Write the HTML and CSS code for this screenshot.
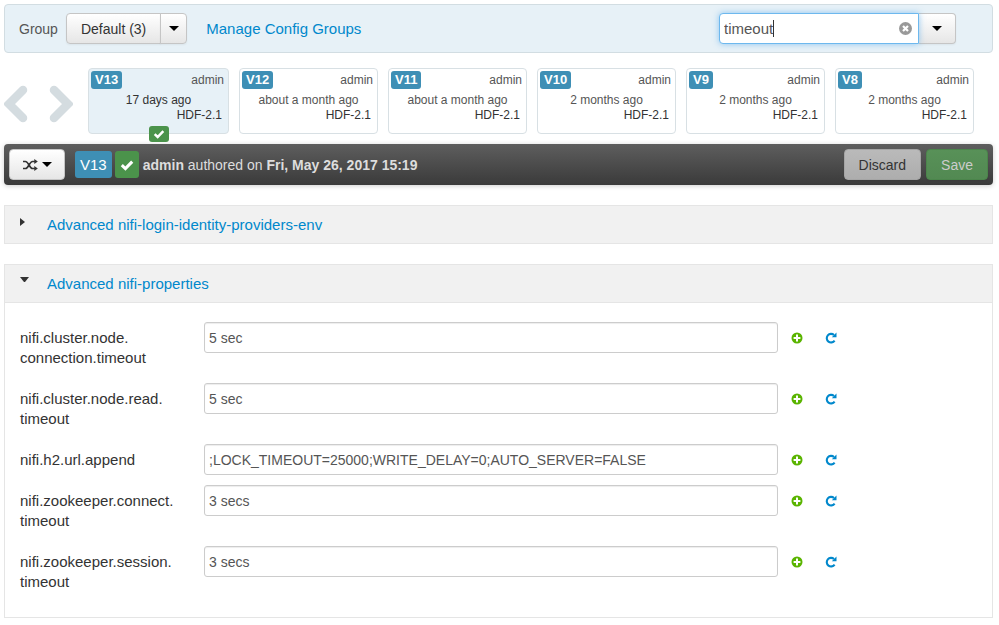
FILE: index.html
```html
<!DOCTYPE html>
<html lang="en">
<head>
  <meta charset="utf-8">
  <title>Service Configs</title>
  <link rel="stylesheet" href="styles.css">
</head>
<body>
  <!-- Shared icons -->
  <svg class="icon-defs" aria-hidden="true">
    <symbol id="icon-check" viewBox="0 0 14 12">
      <path d="M1.8 6.2 L5.4 9.6 L12.2 2.6" fill="none" stroke="currentColor" stroke-width="3"/>
    </symbol>
    <symbol id="icon-plus" viewBox="0 0 12 12">
      <circle cx="6" cy="6" r="5.5" fill="currentColor"/>
      <path d="M6 2.6V9.4M2.6 6H9.4" stroke="#fff" stroke-width="2"/>
    </symbol>
    <symbol id="icon-refresh" viewBox="0 0 12 12">
      <path d="M9.6 8.6 A4.3 4.3 0 1 1 9 3" fill="none" stroke="currentColor" stroke-width="2.1"/>
      <path d="M11.5 0.4V5.2H6.8Z" fill="currentColor"/>
    </symbol>
    <symbol id="icon-chevron" viewBox="0 0 24 38">
      <path d="M19 5 L5 19 L19 33" fill="none" stroke="currentColor" stroke-width="8.5" stroke-linecap="round" stroke-linejoin="miter"/>
    </symbol>
  </svg>

  <div class="group-bar">
    <span class="group-label">Group</span>
    <div class="btn-group">
      <button class="btn group-btn" type="button">Default (3)</button>
      <button class="btn toggle-btn" type="button" aria-label="Select group"><span class="caret"></span></button>
    </div>
    <a class="manage-link" href="#">Manage Config Groups</a>
    <div class="filter">
      <div class="filter-box">
        <input class="filter-input" type="text" value="timeout" aria-label="Filter">
        <span class="text-cursor"></span>
        <button class="clear-btn" type="button" aria-label="Clear filter">
          <svg width="13" height="13" viewBox="0 0 13 13">
            <circle cx="6.5" cy="6.5" r="6.5" fill="#999"/>
            <path d="M4 4L9 9M9 4L4 9" stroke="#fff" stroke-width="2.2"/>
          </svg>
        </button>
      </div>
      <button class="btn filter-toggle" type="button" aria-label="Filter options"><span class="caret"></span></button>
    </div>
  </div>

  <div class="history">
    <div class="history-nav">
      <button class="nav-btn" type="button" aria-label="Previous versions"><svg width="24" height="38"><use href="#icon-chevron"/></svg></button>
      <button class="nav-btn next" type="button" aria-label="Next versions"><svg width="24" height="38"><use href="#icon-chevron"/></svg></button>
    </div>
    <div class="versions">
      <div class="version current">
        <div class="version-top"><span class="label">V13</span><span class="author">admin</span></div>
        <div class="age">17 days ago</div>
        <div class="stack">HDF-2.1</div>
        <span class="current-mark"><svg width="12" height="10"><use href="#icon-check"/></svg></span>
      </div>
      <div class="version">
        <div class="version-top"><span class="label">V12</span><span class="author">admin</span></div>
        <div class="age">about a month ago</div>
        <div class="stack">HDF-2.1</div>
      </div>
      <div class="version">
        <div class="version-top"><span class="label">V11</span><span class="author">admin</span></div>
        <div class="age">about a month ago</div>
        <div class="stack">HDF-2.1</div>
      </div>
      <div class="version">
        <div class="version-top"><span class="label">V10</span><span class="author">admin</span></div>
        <div class="age">2 months ago</div>
        <div class="stack">HDF-2.1</div>
      </div>
      <div class="version">
        <div class="version-top"><span class="label">V9</span><span class="author">admin</span></div>
        <div class="age">2 months ago</div>
        <div class="stack">HDF-2.1</div>
      </div>
      <div class="version">
        <div class="version-top"><span class="label">V8</span><span class="author">admin</span></div>
        <div class="age">2 months ago</div>
        <div class="stack">HDF-2.1</div>
      </div>
    </div>
  </div>

  <div class="version-bar">
    <button class="btn compare-btn" type="button" aria-label="Compare versions">
      <svg width="15" height="12" viewBox="0 0 15 12">
        <path d="M0 2.5H2.5C5.5 2.5 6.5 9.5 9.5 9.5H12M0 9.5H2.5C5.5 9.5 6.5 2.5 9.5 2.5H12" fill="none" stroke="#333" stroke-width="1.6"/>
        <path d="M11.3 0L14.8 2.5L11.3 5ZM11.3 7L14.8 9.5L11.3 12Z" fill="#333"/>
      </svg>
      <span class="caret"></span>
    </button>
    <span class="bar-label">V13</span>
    <span class="bar-label success"><svg width="14" height="12"><use href="#icon-check"/></svg></span>
    <span class="authored"><strong>admin</strong> authored on <strong>Fri, May 26, 2017 15:19</strong></span>
    <button class="btn discard-btn" type="button">Discard</button>
    <button class="btn save-btn" type="button">Save</button>
  </div>

  <div class="section">
    <div class="section-header">
      <span class="arrow right"></span>
      <a href="#">Advanced nifi-login-identity-providers-env</a>
    </div>
  </div>

  <div class="section">
    <div class="section-header open">
      <span class="arrow down"></span>
      <a href="#">Advanced nifi-properties</a>
    </div>
    <div class="section-body">
      <div class="property">
        <label for="connectionTimeout">nifi.cluster.node.<wbr>connection.timeout</label>
        <input id="connectionTimeout" type="text" value="5 sec">
        <div class="actions">
          <button class="add-btn" type="button" aria-label="Override"><svg width="12" height="12"><use href="#icon-plus"/></svg></button>
          <button class="refresh-btn" type="button" aria-label="Set recommended"><svg width="12" height="12"><use href="#icon-refresh"/></svg></button>
        </div>
      </div>
      <div class="property">
        <label for="readTimeout">nifi.cluster.node.read.<wbr>timeout</label>
        <input id="readTimeout" type="text" value="5 sec">
        <div class="actions">
          <button class="add-btn" type="button" aria-label="Override"><svg width="12" height="12"><use href="#icon-plus"/></svg></button>
          <button class="refresh-btn" type="button" aria-label="Set recommended"><svg width="12" height="12"><use href="#icon-refresh"/></svg></button>
        </div>
      </div>
      <div class="property">
        <label for="urlAppend">nifi.h2.url.append</label>
        <input id="urlAppend" type="text" value=";LOCK_TIMEOUT=25000;WRITE_DELAY=0;AUTO_SERVER=FALSE">
        <div class="actions">
          <button class="add-btn" type="button" aria-label="Override"><svg width="12" height="12"><use href="#icon-plus"/></svg></button>
          <button class="refresh-btn" type="button" aria-label="Set recommended"><svg width="12" height="12"><use href="#icon-refresh"/></svg></button>
        </div>
      </div>
      <div class="property">
        <label for="connectTimeout">nifi.zookeeper.connect.<wbr>timeout</label>
        <input id="connectTimeout" type="text" value="3 secs">
        <div class="actions">
          <button class="add-btn" type="button" aria-label="Override"><svg width="12" height="12"><use href="#icon-plus"/></svg></button>
          <button class="refresh-btn" type="button" aria-label="Set recommended"><svg width="12" height="12"><use href="#icon-refresh"/></svg></button>
        </div>
      </div>
      <div class="property">
        <label for="sessionTimeout">nifi.zookeeper.session.<wbr>timeout</label>
        <input id="sessionTimeout" type="text" value="3 secs">
        <div class="actions">
          <button class="add-btn" type="button" aria-label="Override"><svg width="12" height="12"><use href="#icon-plus"/></svg></button>
          <button class="refresh-btn" type="button" aria-label="Set recommended"><svg width="12" height="12"><use href="#icon-refresh"/></svg></button>
        </div>
      </div>
    </div>
  </div>
</body>
</html>
```
FILE: styles.css
```css
* {
  box-sizing: border-box;
}

body {
  margin: 0;
  padding: 4px 6px 7px 4px;
  font-family: "Liberation Sans", Arial, sans-serif;
  font-size: 15px;
  line-height: 20px;
  color: #333;
  background-color: #fff;
}

a {
  color: #0088cc;
  text-decoration: none;
}

button,
input {
  font: inherit;
}

button {
  cursor: pointer;
}

svg {
  display: block;
}

.icon-defs {
  position: absolute;
  width: 0;
  height: 0;
}

.caret {
  border-top: 5px solid #000;
  border-left: 5px solid transparent;
  border-right: 5px solid transparent;
}

.btn {
  display: flex;
  align-items: center;
  justify-content: center;
  height: 31px;
  padding: 0 14px;
  border: 1px solid #c5c5c5;
  border-radius: 4px;
  color: #333;
  background: linear-gradient(#fff, #e6e6e6);
  box-shadow: 0 1px 2px rgba(0, 0, 0, 0.05);
}

/* Group bar */
.group-bar {
  display: flex;
  align-items: center;
  height: 49px;
  padding: 0 36px 0 14px;
  border: 1px solid #d2dde2;
  border-radius: 4px;
  font-size: 14px;
  background-color: #e7f1f7;
}

.group-label {
  margin-right: 8px;
  color: #555;
}

.btn-group {
  display: flex;
}

.group-btn {
  border-radius: 4px 0 0 4px;
}

.toggle-btn {
  width: 27px;
  margin-left: -1px;
  padding: 0;
  border-radius: 0 4px 4px 0;
}

.manage-link {
  margin-left: 19px;
  font-size: 15px;
}

.filter {
  display: flex;
  margin-left: auto;
}

.filter-box {
  position: relative;
}

.filter-input {
  display: block;
  width: 200px;
  height: 31px;
  padding: 0 28px 0 4px;
  border: 1px solid #6db8ee;
  border-radius: 4px 0 0 4px;
  font-size: 15px;
  color: #555;
  background-color: #fff;
  box-shadow: 0 0 6px rgba(82, 168, 236, 0.6);
  outline: none;
}

.text-cursor {
  position: absolute;
  top: 7px;
  left: 54px;
  width: 1px;
  height: 17px;
  background-color: #333;
}

.clear-btn {
  position: absolute;
  top: 9px;
  right: 7px;
  padding: 0;
  border: none;
  background: none;
}

.filter-toggle {
  width: 37px;
  padding: 0;
  border-left: none;
  border-radius: 0 4px 4px 0;
}

/* Version history */
.history {
  display: flex;
  margin-top: 15px;
  padding-right: 19px;
}

.history-nav {
  display: flex;
  align-items: center;
  gap: 21px;
  height: 71px;
  margin-right: 15px;
}

.nav-btn {
  padding: 0;
  border: none;
  color: #d4dce0;
  background: none;
}

.next svg {
  transform: scaleX(-1);
}

.versions {
  display: flex;
  flex: 1;
  gap: 10px;
}

.version {
  position: relative;
  flex: 1 1 40px;
  height: 66px;
  padding: 2px 4px;
  border: 1px solid #d8e0e4;
  border-radius: 4px;
  font-size: 12px;
  line-height: 15px;
  color: #555;
}

.version.current {
  flex-basis: 42px;
  background-color: #e7f1f7;
}

.version-top {
  display: flex;
  justify-content: space-between;
  margin-left: -2px;
}

.label {
  height: 18px;
  padding: 0 4px;
  border-radius: 3px;
  font-size: 13px;
  font-weight: bold;
  line-height: 18px;
  color: #fff;
  background-color: #3e8fb5;
}

.author {
  padding-top: 2px;
}

.age {
  margin-top: 4px;
  text-align: center;
}

.current .age,
.current .stack {
  color: #333;
}

.stack {
  padding-right: 2px;
  text-align: right;
  color: #333;
}

.current-mark {
  position: absolute;
  bottom: -9px;
  left: 50%;
  margin-left: -10px;
  padding: 3px 4px;
  border-radius: 3px;
  color: #fff;
  background-color: #4b934b;
}

/* Selected version bar */
.version-bar {
  display: flex;
  align-items: center;
  height: 41px;
  margin-top: 5px;
  padding: 0 5px;
  border-radius: 4px;
  font-size: 14px;
  color: #ddd;
  background: linear-gradient(#5e5e5e, #3a3a3a);
  box-shadow: 0 1px 5px rgba(0, 0, 0, 0.2);
}

.compare-btn {
  gap: 4px;
  width: 56px;
  margin-right: 10px;
  padding: 0;
}

.bar-label {
  display: flex;
  align-items: center;
  height: 27px;
  margin-right: 3px;
  padding: 0 5px;
  border-radius: 3px;
  font-size: 15px;
  color: #fff;
  background-color: #3e8fb5;
}

.success {
  background-color: #4b934b;
}

.authored {
  flex: 1;
  margin-left: 1px;
}

.discard-btn {
  border-color: #a5a5a5;
  background: linear-gradient(#bababa, #adadad);
}

.save-btn {
  margin-left: 5px;
  border-color: #4b854b;
  color: #ccc;
  background: linear-gradient(#589158, #528952);
}

/* Config sections */
.section {
  margin-top: 20px;
  border: 1px solid #e5e5e5;
}

.section-header {
  display: flex;
  height: 37px;
  padding: 9px 15px;
  background-color: #f1f1f1;
}

.section-header.open {
  height: 38px;
  border-bottom: 1px solid #e5e5e5;
}

.arrow {
  width: 9px;
  height: 8px;
  margin: 3px 18px 0 0;
}

.arrow.right {
  border-left: 5px solid #333;
  border-top: 4px solid transparent;
  border-bottom: 4px solid transparent;
}

.arrow.down {
  height: 5px;
  border-top: 5px solid #333;
  border-left: 4px solid transparent;
  border-right: 4px solid transparent;
}

.section-body {
  padding: 19px 155px 10px 15px;
}

.property {
  display: flex;
  align-items: flex-start;
}

.property label {
  width: 150px;
  margin-right: 34px;
  padding: 6px 0 15px;
}

.property input {
  flex: 1;
  min-width: 0;
  height: 31px;
  padding: 0 4px;
  border: 1px solid #ccc;
  border-radius: 3px;
  font-size: 14px;
  color: #555;
  background-color: #fff;
  box-shadow: inset 0 1px 1px rgba(0, 0, 0, 0.075);
}

.actions {
  display: flex;
  align-items: center;
  gap: 22px;
  height: 31px;
  margin-left: 13px;
}

.actions button {
  padding: 0;
  border: none;
  background: none;
}

.actions .add-btn {
  color: #5ab400;
}

.actions .refresh-btn {
  color: #0088cc;
}
```
